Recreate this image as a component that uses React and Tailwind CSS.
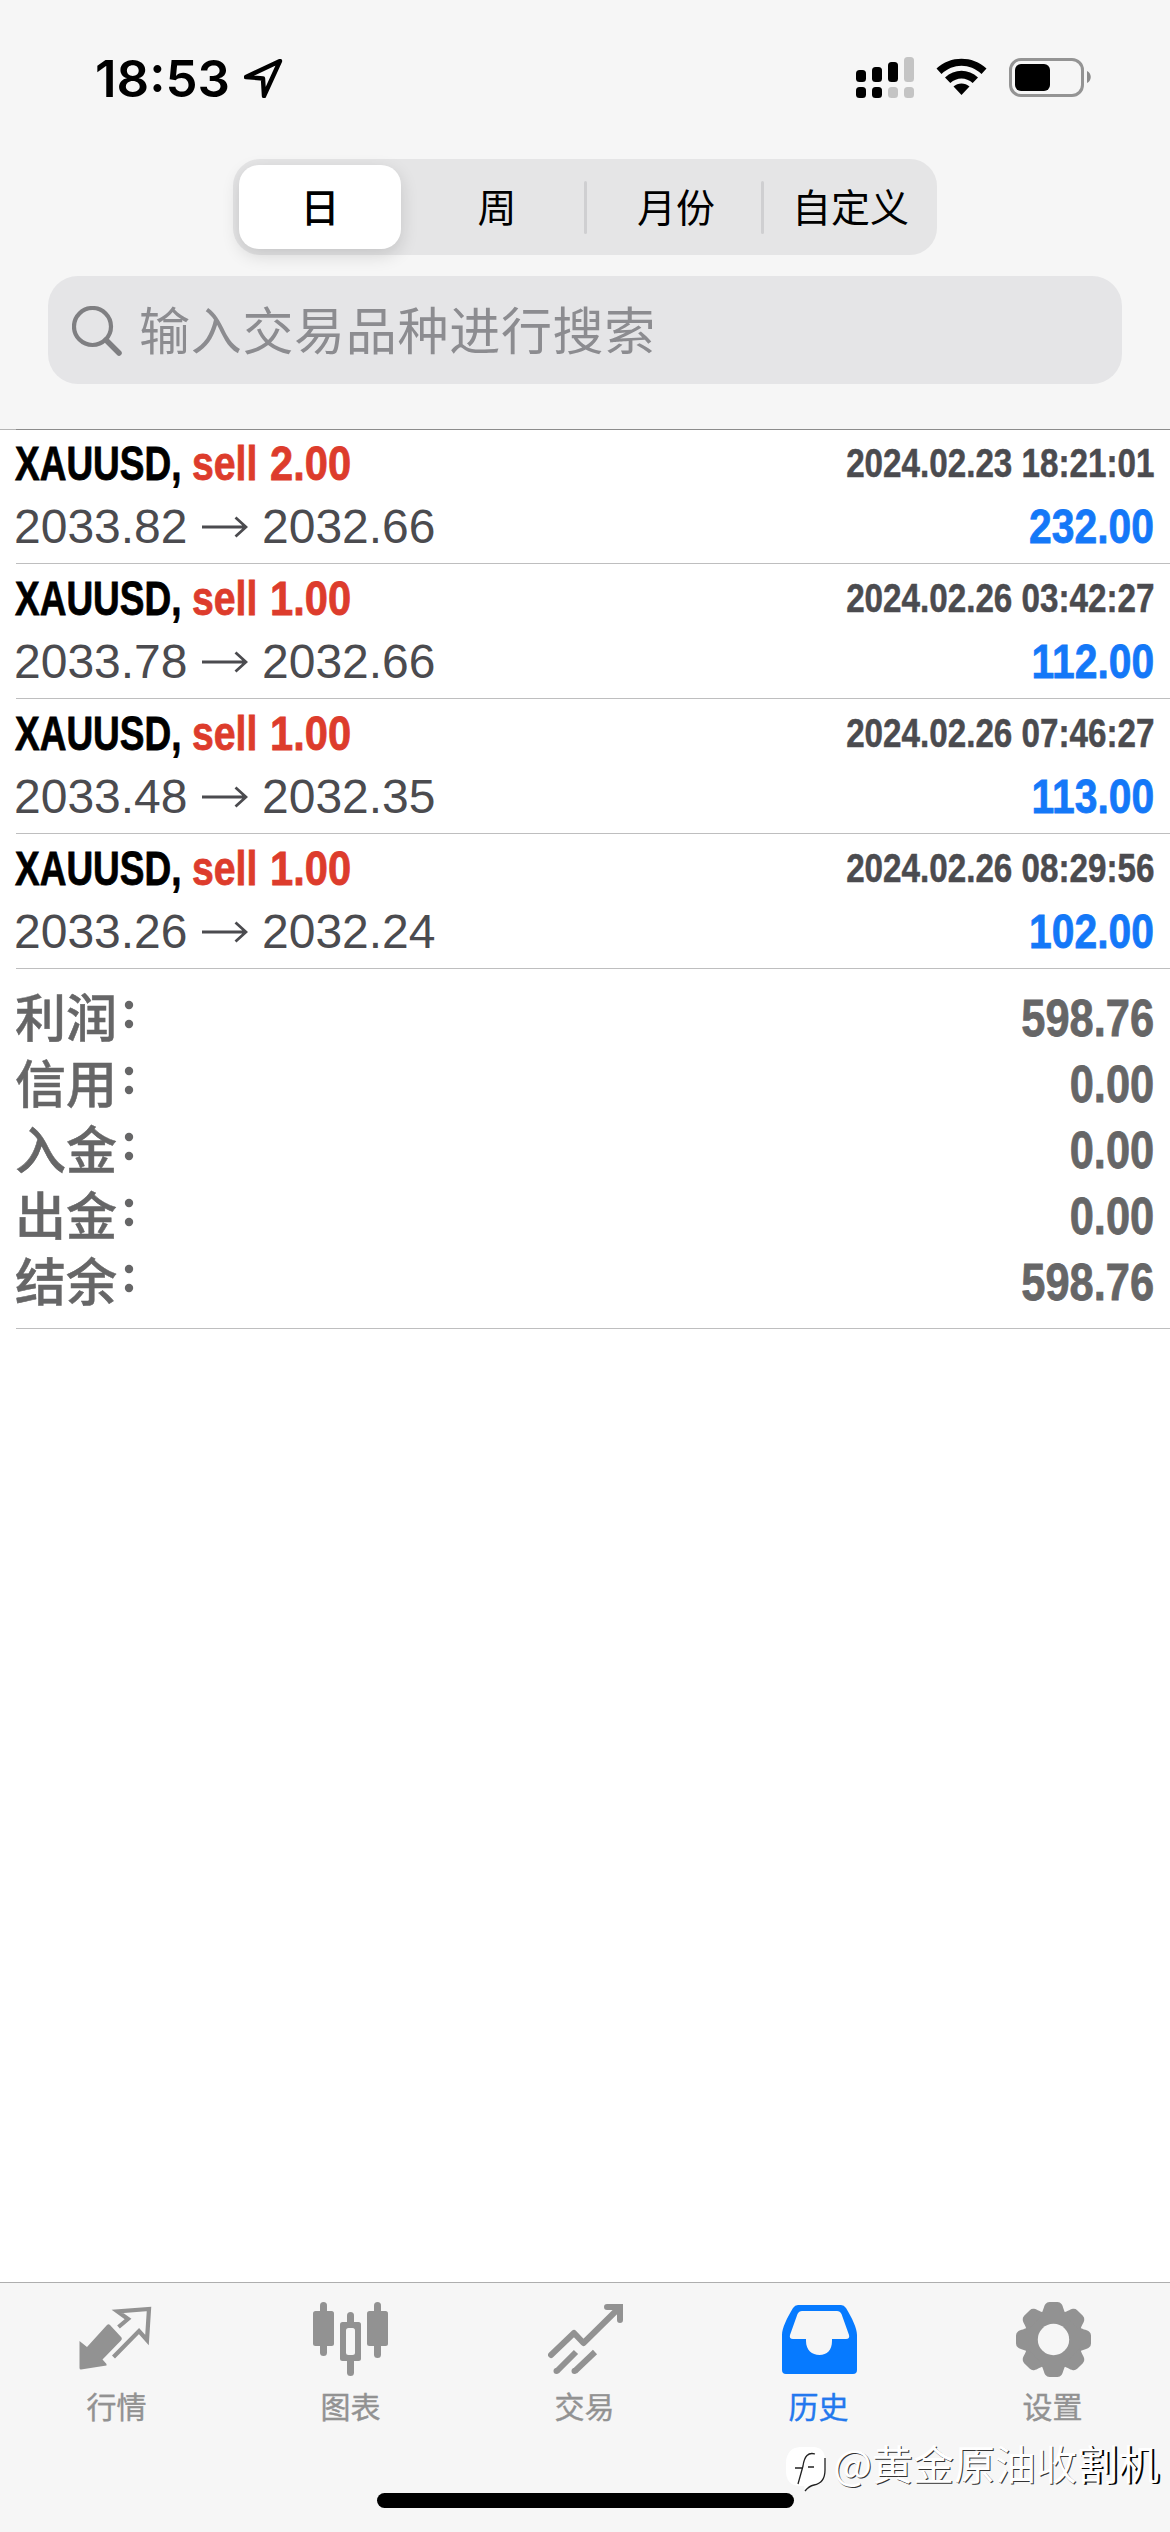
import React from "react";

const deals = [
  { symbol: "XAUUSD", volume: "2.00", open: "2033.82", close: "2032.66", time: "2024.02.23 18:21:01", profit: "232.00" },
  { symbol: "XAUUSD", volume: "1.00", open: "2033.78", close: "2032.66", time: "2024.02.26 03:42:27", profit: "112.00" },
  { symbol: "XAUUSD", volume: "1.00", open: "2033.48", close: "2032.35", time: "2024.02.26 07:46:27", profit: "113.00" },
  { symbol: "XAUUSD", volume: "1.00", open: "2033.26", close: "2032.24", time: "2024.02.26 08:29:56", profit: "102.00" },
];

const totals = [
  { label: "利润", value: "598.76" },
  { label: "信用", value: "0.00" },
  { label: "入金", value: "0.00" },
  { label: "出金", value: "0.00" },
  { label: "结余", value: "598.76" },
];

const periods = ["日", "周", "月份", "自定义"];

const StatusBar = () => (
  <div className="flex h-[159px] items-start justify-between pr-[79px] pl-[95px]">
    <div className="flex pt-[53px]">
      <span className="w-[149px] font-['Inter',sans-serif] text-[51px] leading-[51px] font-semibold text-black">
        18:53
      </span>
      <svg className="mt-[6px] h-[39px] w-[39px]" viewBox="0 0 39 39" fill="none">
        <path
          d="M2 18 L36 2 L20 37 L19 19.500 Z"
          stroke="black"
          strokeWidth="4.400"
          strokeLinejoin="round"
        />
      </svg>
    </div>
    <div className="flex pt-[57px]">
      <svg className="h-[42px] w-[59px]" viewBox="0 0 59 42">
        <rect x="0" y="13" width="10" height="12" rx="3.500" />
        <rect x="16" y="10" width="10" height="15" rx="3.500" />
        <rect x="32" y="5" width="10" height="20" rx="3.500" />
        <rect x="48" y="0" width="10" height="25" rx="3.500" fill="#c4c4c4" />
        <rect x="0" y="30" width="10" height="11" rx="3.500" />
        <rect x="16" y="30" width="10" height="11" rx="3.500" />
        <rect x="32" y="30" width="10" height="11" rx="3.500" fill="#c4c4c4" />
        <rect x="48" y="30" width="10" height="11" rx="3.500" fill="#c4c4c4" />
      </svg>
      <svg className="mt-[1px] ml-[21px] h-[39px] w-[51px]" viewBox="0 0 51 39">
        <path d="M0.500 10.500 C14.500 -2.500 36.500 -2.500 50.500 10.500 L45.500 16 C34 5 17 5 5.500 16 Z" />
        <path d="M9 19.500 C18.500 10.500 32.500 10.500 42 19.500 L36.700 25 C30 19 21 19 14.300 25 Z" />
        <path d="M17.500 28.500 C22 24.500 29 24.500 33.500 28.500 L25.500 37 Z" />
      </svg>
      <svg className="mt-[1px] ml-[22px] h-[39px] w-[82px]" viewBox="0 0 82 39">
        <rect x="1.500" y="1.500" width="72" height="36" rx="10.500" fill="none" stroke="#949494" strokeWidth="3" />
        <rect x="6" y="6" width="35" height="27" rx="6" />
        <path d="M78 13 C83 15 83 23 78 25 Z" fill="#8c8c8c" />
      </svg>
    </div>
  </div>
);

const PeriodTabs = () => (
  <div className="mx-auto flex h-[96px] w-[704px] items-center rounded-[27px] bg-[#e5e5e6] px-[6px] font-['Noto_Sans_CJK_SC',sans-serif] text-[39px] leading-[80px] text-black">
    <div className="flex h-[84px] w-[162px] justify-center rounded-[20px] bg-white font-medium shadow-[0_6px_18px_rgba(0,0,0,0.14)]">
      {periods[0]}
    </div>
    <div className="h-[84px] w-[183px] pl-[9px] text-center">{periods[1]}</div>
    <div className="h-[53px] w-[3px] rounded-full bg-[#cfcfd1]" />
    <div className="h-[84px] w-[174px] pl-[4px] text-center">{periods[2]}</div>
    <div className="h-[53px] w-[3px] rounded-full bg-[#cfcfd1]" />
    <div className="h-[84px] flex-1 pl-[6px] text-center">{periods[3]}</div>
  </div>
);

const SearchBar = () => (
  <div className="mx-12 mt-[21px] flex h-[108px] items-center rounded-[30px] bg-[#e5e5e7] pl-[24px]">
    <svg className="mt-[1px] h-[50px] w-[50px]" viewBox="0 0 50 50" fill="none" stroke="#7f7f82">
      <circle cx="20.500" cy="20.500" r="18.500" strokeWidth="4.200" />
      <path d="M34 34 L47 47" strokeWidth="5.500" strokeLinecap="round" />
    </svg>
    <span className="-mt-[4px] ml-[17px] font-['Noto_Sans_CJK_SC',sans-serif] text-[51px] leading-[60px] tracking-[0.7px] text-[#8c8c90]">
      输入交易品种进行搜索
    </span>
  </div>
);

const DealRow = ({ deal }) => (
  <div className="ml-4 flex h-[135px] justify-between border-b border-[#bebebf] pt-[3px] pr-4 font-['Liberation_Sans',Arial,sans-serif]">
    <div>
      <div className="-ml-[1px] flex h-[63px] text-[49px] leading-[63px] font-bold [-webkit-text-stroke:0.8px]">
        <span className="w-[177px] origin-left scale-x-[0.755] text-black">{deal.symbol},</span>
        <span className="w-[78px] origin-left scale-x-[0.8] text-[#dd3c2c]">sell</span>
        <span className="origin-left scale-x-[0.85] text-[#dd3c2c]">{deal.volume}</span>
      </div>
      <div className="flex h-[63px] items-center text-[48px] leading-[63px] text-[#4b4b4f]">
        <span className="w-[187px] origin-left -ml-[2px]">{deal.open}</span>
        <svg className="mr-[14px] h-[22px] w-[47px]" viewBox="0 0 47 22" fill="none" stroke="#4b4b4f" strokeWidth="2.800">
          <path d="M1 11 H45 M34.500 1.500 L45 11 L34.500 20.500" />
        </svg>
        <span>{deal.close}</span>
      </div>
    </div>
    <div className="flex flex-col items-end font-bold whitespace-nowrap">
      <span className="mt-[1px] mb-[2px] origin-right scale-x-[0.83] text-[40px] leading-[60px] text-[#4b4b4f] [-webkit-text-stroke:0.5px]">
        {deal.time}
      </span>
      <span className="origin-right scale-x-[0.833] text-[49px] leading-[63px] text-[#1478f8] [-webkit-text-stroke:0.8px]">
        {deal.profit}
      </span>
    </div>
  </div>
);

const Totals = () => (
  <div className="ml-4 h-[360px] border-b border-[#bebebf] pt-[13px] pr-4 text-[#666667]">
    {totals.map((item) => (
      <div key={item.label} className="flex h-[66px] justify-between">
        <span className="-ml-[1px] flex font-['Noto_Sans_CJK_SC',sans-serif] text-[51px] leading-[66px] font-medium [-webkit-text-stroke:0.5px]">
          {item.label}
          <svg className="mt-[18px] ml-[7px] h-[30px] w-[10px]" viewBox="0 0 10 30" fill="#666667">
            <circle cx="5" cy="5" r="4.200" />
            <circle cx="5" cy="24" r="4.200" />
          </svg>
        </span>
        <span className="origin-right scale-x-[0.835] pt-[3px] font-['Liberation_Sans',Arial,sans-serif] text-[52px] leading-[66px] font-bold [-webkit-text-stroke:0.8px]">
          {item.value}
        </span>
      </div>
    ))}
  </div>
);

const QuotesIcon = () => (
  <svg className="mr-[3px] h-[75px] w-[75px]" viewBox="0 0 75 75">
    <path
      d="M1.500 39 L9 45 L29 23 Q30.500 21.500 32 23 L43.500 35.500 Q44.500 37 43 38.500 L24.500 57.500 L28.500 62 V63.500 L3 67.500 Q1.500 67.500 1.500 66 Z"
      fill="#929292"
    />
    <path
      d="M40.500 25 L50 17 L39.500 9.500 L71 7 L69 38 L61 29 L35.500 55"
      fill="none"
      stroke="#929292"
      strokeWidth="4.200"
    />
  </svg>
);

const ChartIcon = () => (
  <svg className="mr-[1px] h-[75px] w-[75px]" viewBox="0 0 75 75" fill="#929292">
    <rect x="7" y="0" width="7" height="54" rx="3.500" />
    <rect x="0" y="9" width="21" height="35" rx="2.500" />
    <rect x="61" y="0" width="7" height="56" rx="3.500" />
    <rect x="54" y="9" width="21" height="35" rx="2.500" />
    <rect x="34" y="10" width="7" height="64" rx="3.500" />
    <rect x="27" y="20" width="21" height="39" rx="2.500" />
    <rect x="33" y="26" width="9" height="27" rx="2.500" fill="#f6f6f6" />
  </svg>
);

const TradeIcon = () => (
  <svg className="h-[75px] w-[75px]" viewBox="0 0 75 75" fill="none" stroke="#929292" strokeWidth="6">
    <path d="M3 53 L26 31 L35.500 41 L71 6" strokeLinecap="round" strokeLinejoin="round" />
    <path d="M59 5 H72 V18" strokeLinecap="round" />
    <path d="M9 69 L28 50 M27 69 L47 50" />
    <circle cx="8.500" cy="69" r="3" fill="#929292" stroke="none" />
    <circle cx="26.500" cy="69" r="3" fill="#929292" stroke="none" />
  </svg>
);

const HistoryIcon = () => (
  <svg className="h-[75px] w-[75px]" viewBox="0 0 75 75">
    <path
      fillRule="evenodd"
      fill="#067aff"
      d="M16 3 H59 Q62 3 64 6 C70 16 75 26 75 33 V68 Q75 72 71 72 H4 Q0 72 0 68 V33 C0 26 5 16 11 6 Q13 3 16 3 Z M20 9 Q17 9 15.500 12 L8 33 Q7 37 11 37 H24 V39 C24 48 30 53 37.500 53 C45 53 50 48 50 39 V37 H64 Q68 37 67 33 L59.500 12 Q58 9 55 9 Z"
    />
  </svg>
);

const SettingsIcon = () => (
  <svg className="h-[75px] w-[75px]" viewBox="-37.5 -37.5 75 75">
    <g fill="#929292">
      <circle r="29" />
      {[0, 45, 90, 135, 180, 225, 270, 315].map((angle) => (
        <path
          key={angle}
          transform={`rotate(${angle})`}
          d="M-13 -25 C-10 -28 -10 -33 -8 -35.500 Q-6.500 -37.500 -4 -37.500 H4 Q6.500 -37.500 8 -35.500 C10 -33 10 -28 13 -25 Z"
        />
      ))}
    </g>
    <circle r="15.700" fill="#f6f6f6" />
  </svg>
);

const tabs = [
  { label: "行情", icon: QuotesIcon },
  { label: "图表", icon: ChartIcon },
  { label: "交易", icon: TradeIcon },
  { label: "历史", icon: HistoryIcon, active: true },
  { label: "设置", icon: SettingsIcon },
];

const TabBar = () => (
  <div className="flex h-[250px] flex-col border-t border-[#aeaeae] bg-[#f6f6f6]">
    <div className="grid h-[210px] grid-cols-5">
      {tabs.map(({ label, icon: Icon, active }) => (
        <div
          key={label}
          className={`flex flex-col items-center pt-[19px] font-['Noto_Sans_CJK_SC',sans-serif] text-[30px] leading-[44px] ${
            active ? "text-[#2378ee]" : "text-[#929292]"
          }`}
        >
          <Icon />
          <span className="mt-[6px] mr-[1px] [-webkit-text-stroke:0.4px]">{label}</span>
        </div>
      ))}
    </div>
    <div className="mx-auto h-[15px] w-[417px] rounded-full bg-black" />
  </div>
);

const Watermark = () => (
  <div className="absolute right-[11px] bottom-[40px] flex">
    <svg className="mt-[14px] mr-[5px] h-[46px] w-[43px]" viewBox="0 0 43 46">
      <path d="M21 1 H29 Q40 2 40 14 V24 Q40 37 29 39 Q24 40 20 45 L19 40 H14 Q1 39 1 25 V16 Q2 2 15 1 Z" fill="white" />
      <path d="M40 12 V24 Q40 37 29 39 Q24 40 20 45 M30 8 Q20 5 18 20 L13 38 M10 22 H18 M23 21 H29" fill="none" stroke="#222" strokeWidth="1.300" />
    </svg>
    <span className="font-['Noto_Sans_CJK_SC',sans-serif] text-[41px] leading-[60px] text-white [text-shadow:1px_1px_0_#333]">
      @黄金原油收
      <span className="[text-shadow:2px_1px_0_#000]">割机</span>
    </span>
  </div>
);

export default function App() {
  return (
    <div className="relative flex h-[2532px] w-[1170px] flex-col overflow-hidden bg-white">
      <header className="h-[429px] bg-[#f6f6f6]">
        <StatusBar />
        <PeriodTabs />
        <SearchBar />
      </header>
      <div className="h-px bg-[#b5b5b5] pl-4">
        <div className="h-px bg-[#8c8c8c]" />
      </div>
      <main className="-mt-px flex-1">
        {deals.map((deal) => (
          <DealRow key={deal.time} deal={deal} />
        ))}
        <Totals />
      </main>
      <TabBar />
      <Watermark />
    </div>
  );
}
